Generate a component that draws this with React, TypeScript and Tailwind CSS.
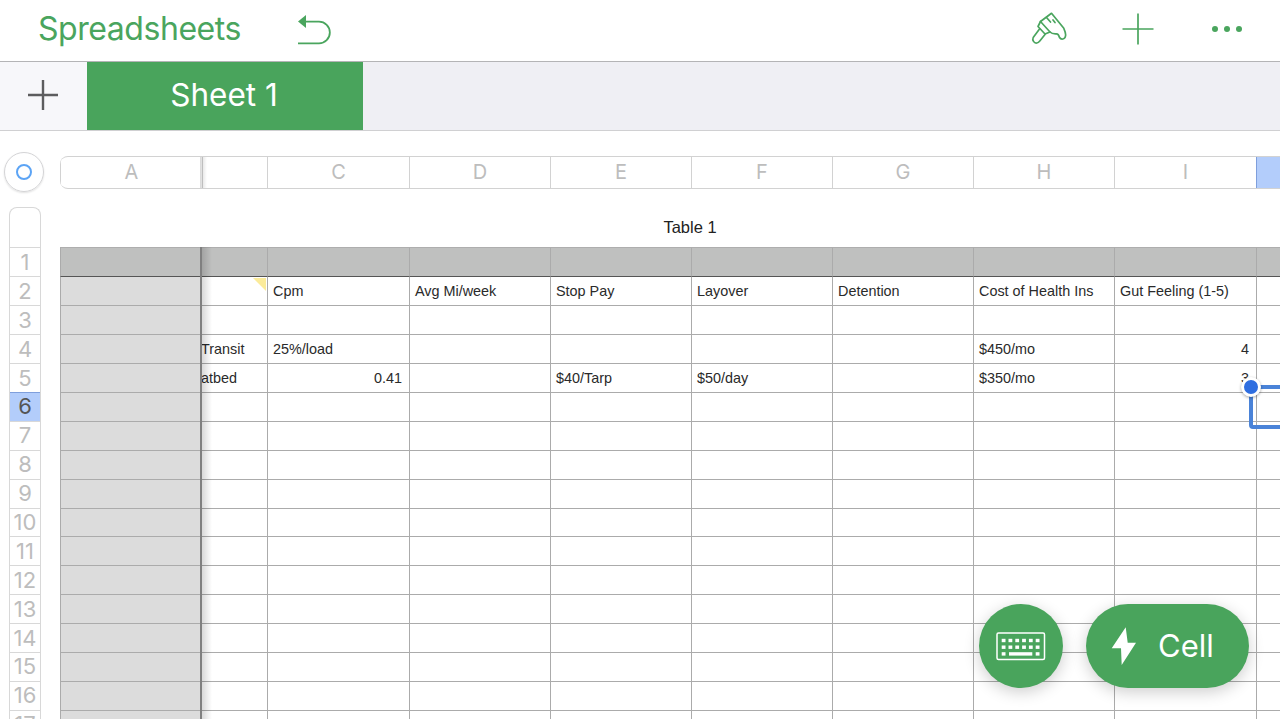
const columns = [
  { name: "A", width: 142 },
  { name: "", width: 65 },
  { name: "C", width: 142 },
  { name: "D", width: 141 },
  { name: "E", width: 141 },
  { name: "F", width: 141 },
  { name: "G", width: 141 },
  { name: "H", width: 141 },
  { name: "I", width: 142 },
  { name: "", width: 24 },
];

const rowCount = 17;
const rows = Array.from({ length: rowCount }, (_, i) => i + 1);

// cell text keyed by row, then column index
const cells: Record<number, Record<number, { text: string; right?: boolean }>> = {
  2: {
    2: { text: "Cpm" },
    3: { text: "Avg Mi/week" },
    4: { text: "Stop Pay" },
    5: { text: "Layover" },
    6: { text: "Detention" },
    7: { text: "Cost of Health Ins" },
    8: { text: "Gut Feeling (1-5)" },
  },
  4: {
    1: { text: "Transit" },
    2: { text: "25%/load" },
    7: { text: "$450/mo" },
    8: { text: "4", right: true },
  },
  5: {
    1: { text: "atbed" },
    2: { text: "0.41", right: true },
    4: { text: "$40/Tarp" },
    5: { text: "$50/day" },
    7: { text: "$350/mo" },
    8: { text: "3", right: true },
  },
};

function UndoIcon() {
  return (
    <svg width="36" height="34" viewBox="0 0 36 34" fill="none">
      <path d="M9 9.6H23A10.85 10.85 0 0 1 23 31.3H2" stroke="#4aa55e" strokeWidth="1.8" />
      <path d="M2 9.6L10 3V16Z" fill="#4aa55e" />
    </svg>
  );
}

function BrushIcon() {
  return (
    <svg width="36" height="34" viewBox="0 0 36 34" fill="none" stroke="#4aa55e" strokeWidth="1.7" strokeLinejoin="round" strokeLinecap="round">
      <path d="M20.5 1.3L32.8 16.3C34 19 35 22 34.5 24C34 27.5 30 28 28.5 25.5C28 23.5 27.5 21.8 25.5 21.8C23 22 21 22 19 20L9.5 9.5Z" />
      <path d="M9.5 9.5L7 14.5L14 22L19 20" />
      <path d="M8.5 17L2.2 25.5C1 28 3 31.5 5.8 31C7 30.8 8 30 8.8 29L14 22.5" />
      <path d="M15.5 5.5L19.5 10M22 8L24 10.5" />
    </svg>
  );
}

function KeyboardIcon() {
  const keys = [0, 1, 2, 3, 4, 5];
  return (
    <svg width="50" height="29" viewBox="0 0 50 29" fill="none">
      <rect x="1" y="1" width="47.5" height="26.5" rx="1.5" stroke="white" strokeWidth="1.5" />
      {keys.map((k) => (
        <rect key={`a${k}`} x={5.7 + k * 6.8} y="6.8" width="3.8" height="3.4" fill="white" />
      ))}
      {keys.map((k) => (
        <rect key={`b${k}`} x={5.7 + k * 6.8} y="13.5" width="3.8" height="3.4" fill="white" />
      ))}
      <rect x="5.7" y="20.2" width="3.8" height="3.4" fill="white" />
      <rect x="13" y="20.2" width="23.3" height="3.4" fill="white" />
      <rect x="39.7" y="20.2" width="3.8" height="3.4" fill="white" />
    </svg>
  );
}

function BoltIcon() {
  return (
    <svg width="28" height="40" viewBox="0 0 28 40" fill="white">
      <path d="M15.7 1.3L1.7 22.3H11L11.7 39L26 16.7H17.7Z" />
    </svg>
  );
}

export default function App() {
  return (
    <div className="relative flex h-[719px] w-[1280px] flex-col overflow-hidden bg-white font-['Inter',sans-serif]">
      {/* Top toolbar */}
      <header className="flex h-[62px] shrink-0 items-center border-b border-[#b4b4b6] pb-[3px] pl-[38px] pr-[38px]">
        <span className="w-[258px] text-[32px] leading-none tracking-[-0.45px] text-[#4aa55e]">Spreadsheets</span>
        <UndoIcon />
        <div className="ml-auto flex items-center gap-[55px]">
          <BrushIcon />
          <svg width="32" height="32" viewBox="0 0 32 32" stroke="#4aa55e" strokeWidth="1.7">
            <path d="M16 0.5V31.5M0.5 16H31.5" />
          </svg>
          <div className="ml-[3px] flex w-[30px] justify-between">
            <span className="size-[6px] rounded-full bg-[#4aa55e]" />
            <span className="size-[6px] rounded-full bg-[#4aa55e]" />
            <span className="size-[6px] rounded-full bg-[#4aa55e]" />
          </div>
        </div>
      </header>

      {/* Sheet tabs */}
      <div className="flex h-[69px] shrink-0 border-b border-[#d0d0d2] bg-[#efeff4]">
        <div className="flex w-[87px] items-center justify-center bg-[#f7f7fa] pb-[2px] pr-[2px]">
          <svg width="30" height="30" viewBox="0 0 30 30" stroke="#5c5c5e" strokeWidth="2.4">
            <path d="M15 0V30M0 15H30" />
          </svg>
        </div>
        <div className="flex w-[276px] items-center justify-center bg-[#49a45c] pb-[3px] pr-[2px] text-[31.5px] text-white">Sheet 1</div>
      </div>

      {/* Column headers */}
      <div className="flex shrink-0 items-center pl-1 pt-[21px]">
        <div className="flex size-10 items-center justify-center rounded-full border border-[#d4d4d6] shadow-[0_1px_2px_rgba(0,0,0,0.12)]">
          <div className="size-4 rounded-full border-2 border-[#5ca4f5]" />
        </div>
        <div className="ml-4 flex h-[33px] flex-1 overflow-hidden rounded-l-lg border-y border-[#d2d2d2]">
          {columns.map((col, i) => (
            <div
              key={i}
              style={{ width: col.width }}
              className={
                i === 9
                  ? "shrink-0 border-l border-[#7f9fdc] bg-[#b3cdfb]"
                  : "flex shrink-0 items-center justify-center border-l border-[#d2d2d2] text-[20px] text-[#bdbdbd]"
              }
            >
              {col.name}
            </div>
          ))}
        </div>
      </div>

      <div className="flex flex-1 pl-[9px] pt-[15px]">
        {/* Row numbers */}
        <div className="w-8 shrink-0 rounded-t-lg border-x border-t border-[#d8d8d8]">
          <div className="h-[39.49px]" />
          {rows.map((row) => (
            <div
              key={row}
              className={
                row === 6
                  ? "flex h-[28.9px] items-center justify-center border-t border-[#7f9fdc] bg-[#b3cdfb] text-[22px] text-[#555]"
                  : "flex h-[28.9px] items-center justify-center border-t border-[#d8d8d8] text-[22px] text-[#bdbdbd]"
              }
            >
              {row}
            </div>
          ))}
        </div>

        {/* Table */}
        <div className="ml-[19px] flex-1">
          <div className="flex h-[40.49px] items-center justify-center pl-[40px] font-['Liberation_Sans',sans-serif] text-[16.5px] text-[#222]">
            Table 1
          </div>
          {rows.map((row) => (
            <div key={row} className="flex h-[28.9px] font-['Liberation_Sans',sans-serif] text-[14.4px] text-[#2a2a2a]">
              {columns.map((col, i) => {
                const cell = cells[row]?.[i];
                return (
                  <div
                    key={i}
                    style={{ width: col.width }}
                    className={[
                      "flex shrink-0 items-center whitespace-nowrap border-t pl-[5px] pr-[7px] pt-[1px]",
                      i === 1 ? "" : "border-l border-l-[#ababab]",
                      row === 1 ? "bg-[#bfc0bf] border-t-[#aeaeae]" : i === 0 ? "bg-[#dcdcdc]" : "",
                      row === 2 ? "border-t-[#555]" : row > 2 ? "border-t-[#ababab]" : "",
                      cell?.right ? "justify-end" : "",
                    ].join(" ")}
                  >
                    {i === 1 ? <span className="-ml-[6px]">{cell?.text}</span> : cell?.text}
                  </div>
                );
              })}
            </div>
          ))}
        </div>
      </div>

      {/* Frozen column edge */}
      <div className="absolute left-[200px] top-[157px] h-[31px] w-[7px] bg-gradient-to-r from-black/15 to-transparent" />
      <div className="absolute bottom-0 left-[200px] top-[247px] w-[2px] bg-[#808080]" />
      <div className="absolute bottom-0 left-[202px] top-[247px] w-[10px] bg-gradient-to-r from-black/15 to-transparent" />
      <div className="absolute left-[253px] top-[278px] size-0 border-l-[13px] border-t-[13px] border-l-transparent border-t-[#fbeb9a]" />

      {/* Selected cell */}
      <div className="absolute left-[1249px] top-[385px] h-[44px] w-[40px] rounded-sm border-[4px] border-[#4a83d8]" />
      <div className="absolute left-[1241px] top-[377px] size-5 rounded-full border-[3px] border-white bg-[#2f6ee0] shadow-[0_1px_3px_rgba(0,0,0,0.35)]" />

      {/* Floating buttons */}
      <div className="absolute left-[979px] top-[604px] flex size-[84px] items-center justify-center rounded-full bg-[#49a45c] shadow-[0_4px_16px_rgba(0,0,0,0.2)]">
        <KeyboardIcon />
      </div>
      <div className="absolute left-[1086px] top-[604px] flex h-[84px] w-[163px] items-center rounded-full bg-[#49a45c] pl-6 text-[31px] text-white shadow-[0_4px_16px_rgba(0,0,0,0.2)]">
        <BoltIcon />
        <span className="ml-[20px]">Cell</span>
      </div>
    </div>
  );
}
